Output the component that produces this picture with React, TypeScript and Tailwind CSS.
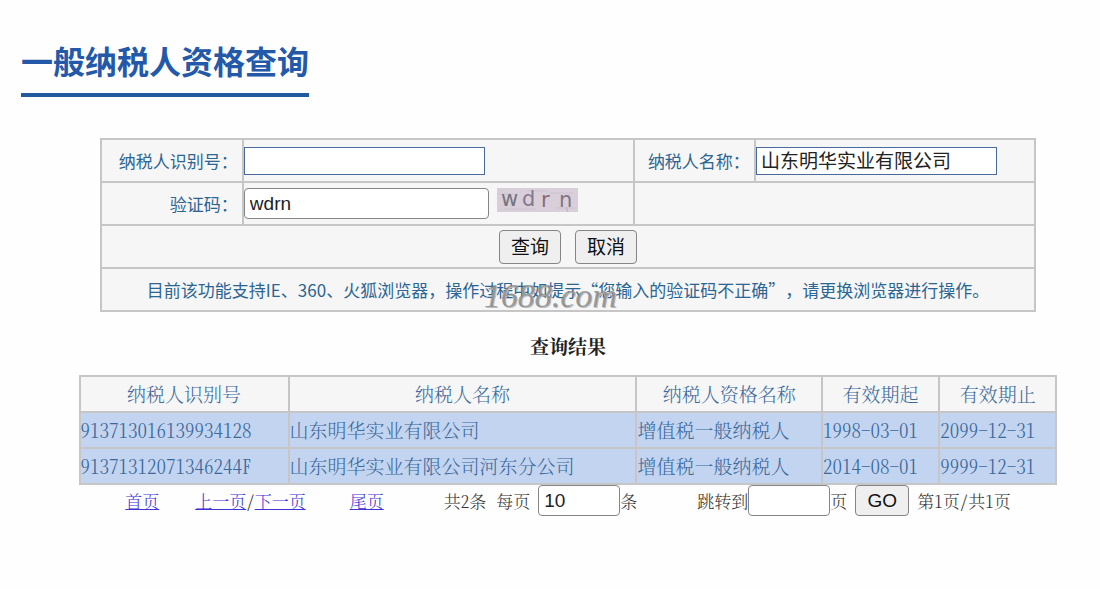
import { useState } from "react";

type Taxpayer = {
  id: string;
  name: string;
  qualification: string;
  validFrom: string;
  validTo: string;
};

const results: Taxpayer[] = [
  {
    id: "913713016139934128",
    name: "山东明华实业有限公司",
    qualification: "增值税一般纳税人",
    validFrom: "1998-03-01",
    validTo: "2099-12-31",
  },
  {
    id: "91371312071346244F",
    name: "山东明华实业有限公司河东分公司",
    qualification: "增值税一般纳税人",
    validFrom: "2014-08-01",
    validTo: "9999-12-31",
  },
];

const cell = "border-2 border-[#c6c6c6] p-0";
const labelCell = "border-2 border-[#c6c6c6] p-0 pr-1 text-right";
const arial = "font-['Liberation_Sans','Noto_Sans_CJK_SC',sans-serif]";
const hei = "font-['Noto_Sans_CJK_SC',sans-serif]";
const roundInput = `h-[31px] rounded-[4px] border border-[#858585] bg-white px-[5px] text-[19px] text-[#222] ${arial}`;
const squareInput = `block h-7 w-[241px] border border-[#4a6a9c] bg-white px-1 text-[19px] text-[#222] ${hei}`;
const button = "rounded-[4px] border border-[#858585] bg-[#efefef] text-[19px] text-[#111]";

function Captcha() {
  return (
    <svg className="overflow-visible" width="81" height="24" viewBox="0 0 81 24" role="img" aria-label="验证码">
      <rect width="81" height="24" fill="#d9cfda" />
      <path d="M0 6h18M30 3h20M58 20h20M8 21h30M52 5h24" stroke="#cbc3d0" strokeWidth="1" />
      <path d="M69 19l2 5" stroke="#b9adc0" strokeWidth="1" />
      <g fontFamily="'DejaVu Sans', sans-serif" fontSize="21">
        <text x="4" y="18" fill="#75757f">w</text>
        <text x="25" y="18" fill="#85788a">d</text>
        <text x="44" y="19" fill="#8c6a78">r</text>
        <text x="62" y="19" fill="#857585">n</text>
      </g>
    </svg>
  );
}

function QueryForm() {
  const [taxId, setTaxId] = useState("");
  const [name, setName] = useState("山东明华实业有限公司");
  const [code, setCode] = useState("wdrn");

  const reset = () => {
    setTaxId("");
    setName("");
    setCode("");
  };

  return (
    <form className="relative mx-auto w-[88%]" onSubmit={(e) => e.preventDefault()}>
      <table className="w-full table-fixed border-collapse bg-[#f6f6f6] text-[17px] text-[#2b6593]">
        <colgroup>
          <col className="w-[142px]" />
          <col />
          <col className="w-[121px]" />
          <col className="w-[30%]" />
        </colgroup>
        <tbody>
          <tr className="h-[43px]">
            <td className={labelCell}>
              <label htmlFor="taxId">纳税人识别号：</label>
            </td>
            <td className={cell}>
              <input id="taxId" className={squareInput} value={taxId} onChange={(e) => setTaxId(e.target.value)} />
            </td>
            <td className={labelCell}>
              <label htmlFor="name">纳税人名称：</label>
            </td>
            <td className={cell}>
              <input id="name" className={squareInput} value={name} onChange={(e) => setName(e.target.value)} />
            </td>
          </tr>
          <tr className="h-[43px]">
            <td className={labelCell}>
              <label htmlFor="code">验证码：</label>
            </td>
            <td className={cell}>
              <div className="flex items-start gap-2">
                <input
                  id="code"
                  className={`w-[245px] ${roundInput}`}
                  value={code}
                  onChange={(e) => setCode(e.target.value)}
                />
                <Captcha />
              </div>
            </td>
            <td className={cell} colSpan={2}></td>
          </tr>
          <tr className="h-[43px]">
            <td className={cell} colSpan={4}>
              <div className="flex justify-center gap-[14px]">
                <button type="submit" className={`h-[34px] w-[62px] ${button} ${hei}`}>
                  查询
                </button>
                <button type="button" className={`h-[34px] w-[62px] ${button} ${hei}`} onClick={reset}>
                  取消
                </button>
              </div>
            </td>
          </tr>
          <tr className="h-[43px]">
            <td className={`${cell} text-center [text-spacing-trim:space-all]`} colSpan={4}>
              目前该功能支持IE、360、火狐浏览器，操作过程中如提示“您输入的验证码不正确”，请更换浏览器进行操作。
            </td>
          </tr>
        </tbody>
      </table>
      {/* site watermark */}
      <span className="pointer-events-none absolute bottom-0 left-[41%] font-['Liberation_Serif',serif] text-[34px] leading-8 text-[#8a8a8a]/80 italic [text-shadow:1px_1px_0_#bbb]">
        1688.com
      </span>
    </form>
  );
}

function ResultTable() {
  return (
    <table className="mx-auto w-[92%] table-fixed border-collapse text-[19px] leading-6 text-[#3a699c]">
      <colgroup>
        <col className="w-[209px]" />
        <col />
        <col className="w-[19%]" />
        <col className="w-[12%]" />
        <col className="w-[12%]" />
      </colgroup>
      <thead>
        <tr className="h-9 bg-[#f6f6f6]">
          {["纳税人识别号", "纳税人名称", "纳税人资格名称", "有效期起", "有效期止"].map((title) => (
            <th key={title} className={`${cell} font-light`}>
              {title}
            </th>
          ))}
        </tr>
      </thead>
      <tbody>
        {results.map((row) => (
          <tr key={row.id} className="h-9 bg-[#c3d4f0] [font-feature-settings:'hwid']">
            <td className={cell}>{row.id}</td>
            <td className={cell}>{row.name}</td>
            <td className={cell}>{row.qualification}</td>
            <td className={cell}>{row.validFrom}</td>
            <td className={cell}>{row.validTo}</td>
          </tr>
        ))}
      </tbody>
    </table>
  );
}

function Pager() {
  const [pageSize, setPageSize] = useState("10");
  const [target, setTarget] = useState("");
  const link = "text-[#3f33d6] underline";

  return (
    <div className="flex items-center justify-center text-[17px] leading-6 whitespace-nowrap text-[#333] [font-feature-settings:'hwid']">
      <a href="#first" className={`mr-9 ${link}`}>首页</a>
      <a href="#prev" className={link}>上一页</a>
      <span>/</span>
      <a href="#next" className={`mr-11 ${link}`}>下一页</a>
      <a href="#last" className={`mr-[60px] ${link}`}>尾页</a>
      <span className="mr-[10px]">共2条</span>
      <label htmlFor="pageSize" className="mr-2">每页</label>
      <input
        id="pageSize"
        className={`w-[82px] ${roundInput}`}
        value={pageSize}
        onChange={(e) => setPageSize(e.target.value)}
      />
      <span className="mr-[60px]">条</span>
      <label htmlFor="target">跳转到</label>
      <input
        id="target"
        className={`w-[82px] ${roundInput}`}
        value={target}
        onChange={(e) => setTarget(e.target.value)}
      />
      <span className="mr-2">页</span>
      <button type="button" className={`mr-2 h-[31px] w-[54px] ${button} ${arial}`}>
        GO
      </button>
      <span>第1页/共1页</span>
    </div>
  );
}

export default function App() {
  return (
    <div lang="zh-CN" className="min-h-screen bg-[#fefefe] pt-9 font-['Noto_Sans_CJK_SC',sans-serif]">
      <h1 className="ml-[21px] inline-block border-b-4 border-[#215a9f] pb-[9px] text-[32px] leading-[48px] font-bold text-[#2359a8]">
        一般纳税人资格查询
      </h1>
      <main className="mt-[41px] pl-9">
        <QueryForm />
        <section className="font-['Noto_Serif_CJK_SC','Liberation_Serif','Noto_Sans_CJK_SC',serif] font-light">
          <h2 className="mt-5 mb-[15px] text-center text-[19px] leading-7 font-bold text-[#222]">查询结果</h2>
          <ResultTable />
          <Pager />
        </section>
      </main>
    </div>
  );
}
